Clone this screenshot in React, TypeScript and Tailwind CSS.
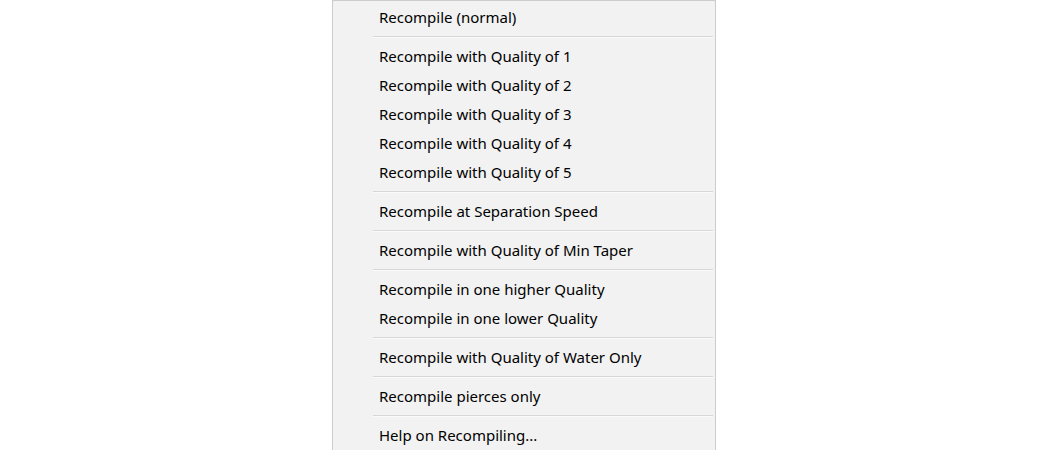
import React from "react";

type Entry = { t: "item"; label: string } | { t: "sep" };

const entries: Entry[] = [
  { t: "item", label: "Recompile (normal)" },
  { t: "sep" },
  { t: "item", label: "Recompile with Quality of 1" },
  { t: "item", label: "Recompile with Quality of 2" },
  { t: "item", label: "Recompile with Quality of 3" },
  { t: "item", label: "Recompile with Quality of 4" },
  { t: "item", label: "Recompile with Quality of 5" },
  { t: "sep" },
  { t: "item", label: "Recompile at Separation Speed" },
  { t: "sep" },
  { t: "item", label: "Recompile with Quality of Min Taper" },
  { t: "sep" },
  { t: "item", label: "Recompile in one higher Quality" },
  { t: "item", label: "Recompile in one lower Quality" },
  { t: "sep" },
  { t: "item", label: "Recompile with Quality of Water Only" },
  { t: "sep" },
  { t: "item", label: "Recompile pierces only" },
  { t: "sep" },
  { t: "item", label: "Help on Recompiling..." },
];

export default function App() {
  return (
    <div className="w-[1050px] h-[450px] bg-white overflow-hidden flex pl-[332px]">
      <div
        className="w-[384px] h-[460px] bg-[#f2f2f2] border border-[#cccccc] pt-[2px] pr-[2px] flex flex-col text-[15px] text-black"
        style={{ fontFamily: '"Noto Sans", "Open Sans", sans-serif' }}
      >
        {entries.map((e, i) =>
          e.t === "item" ? (
            <div key={i} className="h-[29px] flex items-center pl-[46px] leading-none">
              {e.label}
            </div>
          ) : (
            <div key={i} className="h-[10px] flex flex-col justify-center pl-[40px]">
              <div className="h-[1px] bg-[#d7d7d7]" />
              <div className="h-[1px] bg-[#fafafa]" />
            </div>
          )
        )}
      </div>
    </div>
  );
}
